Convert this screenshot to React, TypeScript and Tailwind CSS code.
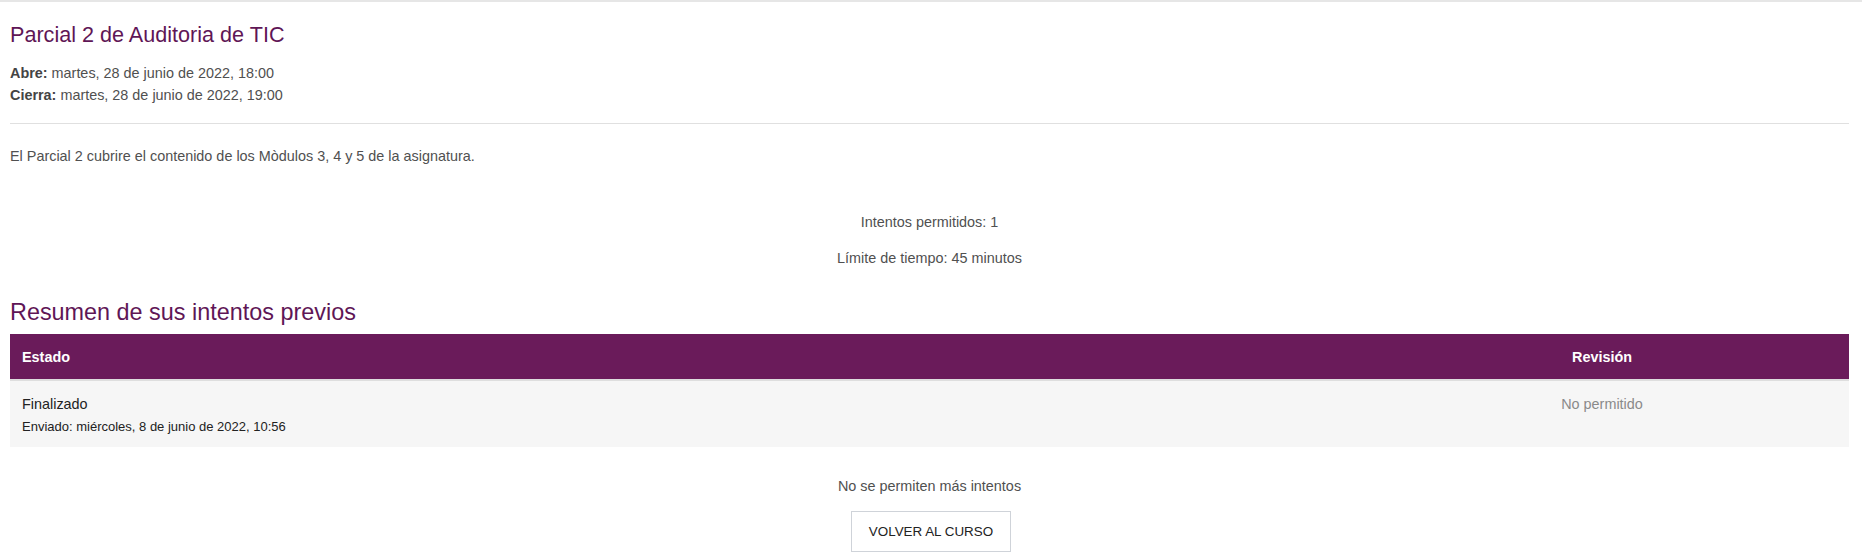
export default function App() {
  return (
    <div className="min-h-screen bg-white border-t-2 border-[#e6e6e6] font-['Liberation_Sans',Arial,sans-serif] text-[#505050]">
      <div className="pl-[10px] pr-[13px]">
        {/* Quiz title + dates */}
        <h2 className="mt-[20px] text-[21.6px] leading-[26px] text-[#5f1656]">
          Parcial 2 de Auditoria de TIC
        </h2>
        <div className="mt-[14px] text-[14.4px] leading-[22px]">
          <div>
            <span className="font-bold text-[#444]">Abre:</span> martes, 28 de junio de 2022, 18:00
          </div>
          <div>
            <span className="font-bold text-[#444]">Cierra:</span> martes, 28 de junio de 2022, 19:00
          </div>
        </div>
        <hr className="mt-[17px] border-0 border-t border-[#e0e0e0]" />
        <p className="mt-[22px] text-[14.4px] leading-[21px]">
          El Parcial 2 cubrire el contenido de los Mòdulos 3, 4 y 5 de la asignatura.
        </p>

        {/* Quiz info */}
        <div className="mt-[45px] text-center text-[14.4px] leading-[21px]">
          <div>Intentos permitidos: 1</div>
          <div className="mt-[15px]">Límite de tiempo: 45 minutos</div>
        </div>

        {/* Previous attempts */}
        <h3 className="mt-[29px] text-[23.4px] leading-[28px] text-[#5f1656]">
          Resumen de sus intentos previos
        </h3>
        <div className="mt-[8px] text-[14.4px]">
          <div className="grid grid-cols-[1fr_494px] bg-[#6a1b5a] text-white font-bold leading-[22px] border-b-2 border-[#dedede]">
            <div className="px-3 py-[11.5px]">Estado</div>
            <div className="px-3 py-[11.5px] text-center">Revisión</div>
          </div>
          <div className="grid grid-cols-[1fr_494px] bg-[#f6f6f6]">
            <div className="px-3 pt-[13px] pb-[11px] text-[#222]">
              <div className="leading-[21px]">Finalizado</div>
              <div className="mt-[2px] text-[13px] leading-[19px]">
                Enviado: miércoles, 8 de junio de 2022, 10:56
              </div>
            </div>
            <div className="px-3 pt-[13px] text-center leading-[21px] text-[#8a8a8a]">
              No permitido
            </div>
          </div>
        </div>

        {/* Footer */}
        <div className="mt-[29px] flex flex-col items-center text-[14.4px] leading-[21px]">
          <div>No se permiten más intentos</div>
          <button className="mt-[14px] ml-[3px] border border-[#cfd3d9] bg-white px-[17px] py-[10px] text-[13.4px] leading-[19px] text-[#222]">
            VOLVER AL CURSO
          </button>
        </div>
      </div>
    </div>
  );
}
